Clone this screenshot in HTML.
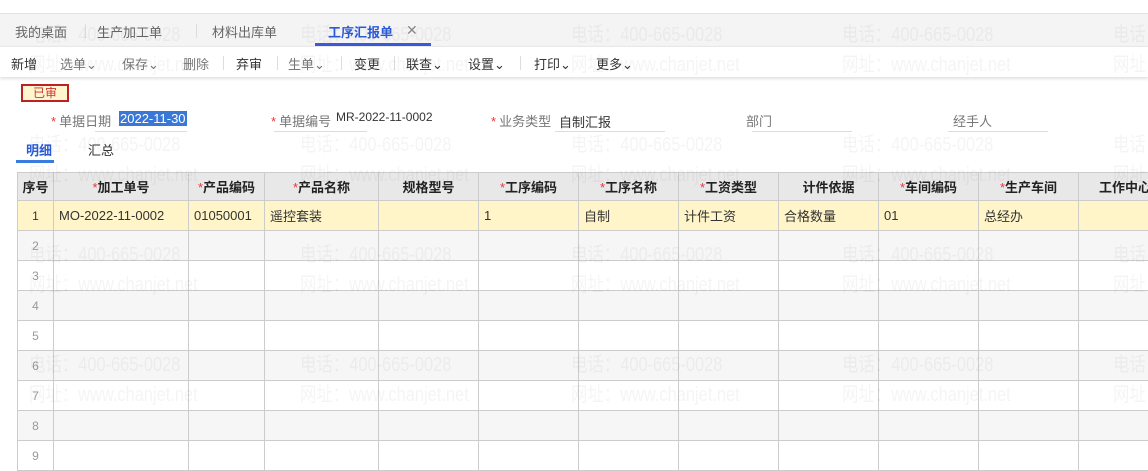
<!DOCTYPE html>
<html><head><meta charset="utf-8"><style>
*{margin:0;padding:0;box-sizing:border-box}
body{width:1148px;height:461px;overflow:hidden;background:#fff;font-family:"Liberation Sans","Noto Sans CJK SC",sans-serif;font-size:13px;color:#333;position:relative}
.tabs{position:absolute;top:13px;left:0;width:1148px;height:33px;background:#f4f4f4;border-top:1px solid #e3e3e3}
.tab{position:absolute;top:8px;font-size:13px;color:#666}
.tb{position:absolute;top:46px;left:0;width:1148px;height:31px;background:#fff;box-shadow:0 2px 3px rgba(0,0,0,.12);border-top:1px solid #e8e8e8}
.tb span{position:absolute;top:7px;font-size:13px}
.sep{position:absolute;top:9px;width:1px;height:14px;background:#ddd}
.lab{position:absolute;top:111px;color:#777}
.lab i{color:#e33;font-style:normal;margin-right:3px}
.ul{position:absolute;top:131px;height:1px;background:#ddd}
table{position:absolute;left:17px;top:172px;border-collapse:collapse;table-layout:fixed;width:1161px}
td,th{border:1px solid #ccc;height:30px;padding:0 5px;white-space:nowrap;overflow:hidden;font-size:13px}
th{background:#e8e8e8;height:28px;font-weight:bold;color:#222;text-align:center}
th i{color:#e33;font-style:normal;font-weight:normal}
tr.y td{background:#fff5c8;color:#333}
tr.g td{background:#f6f6f6}
td.n{text-align:center;color:#999;font-size:12px;padding:0}
.wm{position:absolute;font-size:20px;color:rgba(0,0,0,.045);white-space:nowrap;transform:scaleX(.82);transform-origin:left;z-index:5;pointer-events:none}
</style></head><body>
<div class="tabs">
<span class="tab" style="left:15px">我的桌面</span>
<div class="sep" style="left:85px;top:10px"></div>
<span class="tab" style="left:97px">生产加工单</span>
<div class="sep" style="left:196px;top:10px"></div>
<span class="tab" style="left:212px">材料出库单</span>
<span class="tab" style="left:328px;color:#2b5bd8;font-weight:bold">工序汇报单</span>
<span class="tab" style="left:406px;color:#888;font-size:14px;top:8px">✕</span>
<div style="position:absolute;left:315px;top:29px;width:116px;height:3px;background:#3a5ad6"></div>
</div>
<div class="tb">
<span style="left:11px">新增</span>
<span style="left:60px;color:#777">选单⌄</span>
<span style="left:122px;color:#777">保存⌄</span>
<span style="left:183px;color:#777">删除</span><div class="sep" style="left:223px"></div>
<span style="left:236px">弃审</span><div class="sep" style="left:277px"></div>
<span style="left:288px;color:#777">生单⌄</span><div class="sep" style="left:341px"></div>
<span style="left:354px">变更</span><div class="sep" style="left:394px"></div>
<span style="left:406px">联查⌄</span>
<span style="left:468px">设置⌄</span><div class="sep" style="left:520px"></div>
<span style="left:534px">打印⌄</span>
<span style="left:596px">更多⌄</span>
</div>
<div style="position:absolute;left:21px;top:84px;width:48px;height:18px;border:2px solid #b22;background:#fff6d0;color:#c33;font-size:12px;text-align:center;line-height:14px">已审</div>
<span class="lab" style="left:51px"><i>*</i>单据日期</span>
<span style="position:absolute;left:119px;top:111px;background:#3a78d8;color:#fff;padding:0 1px">2022-11-30</span>
<div class="ul" style="left:95px;width:92px"></div>
<span class="lab" style="left:271px"><i>*</i>单据编号</span>
<span style="position:absolute;left:336px;top:110px;font-size:12px">MR-2022-11-0002</span>
<div class="ul" style="left:274px;width:93px"></div>
<span class="lab" style="left:491px"><i>*</i>业务类型</span>
<span style="position:absolute;left:559px;top:112px">自制汇报</span>
<div class="ul" style="left:555px;width:110px"></div>
<span class="lab" style="left:746px">部门</span>
<div class="ul" style="left:752px;width:100px"></div>
<span class="lab" style="left:953px">经手人</span>
<div class="ul" style="left:948px;width:100px"></div>
<span style="position:absolute;left:26px;top:140px;color:#2b5bd8;font-weight:bold">明细</span>
<span style="position:absolute;left:88px;top:140px">汇总</span>
<div style="position:absolute;left:16px;top:160px;width:38px;height:3px;background:#3a7be0"></div>
<table>
<colgroup><col style="width:36px"><col style="width:135px"><col style="width:76px"><col style="width:114px"><col style="width:100px"><col style="width:100px"><col style="width:100px"><col style="width:100px"><col style="width:100px"><col style="width:100px"><col style="width:100px"><col style="width:100px"></colgroup>
<tr><th style="padding:0 2px">序号</th><th><i>*</i>加工单号</th><th><i>*</i>产品编码</th><th><i>*</i>产品名称</th><th>规格型号</th><th><i>*</i>工序编码</th><th><i>*</i>工序名称</th><th><i>*</i>工资类型</th><th>计件依据</th><th><i>*</i>车间编码</th><th><i>*</i>生产车间</th><th style="text-align:left;padding-left:20px">工作中心</th></tr>
<tr class="y"><td class="n" style="color:#333">1</td><td>MO-2022-11-0002</td><td>01050001</td><td>遥控套装</td><td></td><td>1</td><td>自制</td><td>计件工资</td><td>合格数量</td><td>01</td><td>总经办</td><td></td></tr>
<tr class="g"><td class="n">2</td><td></td><td></td><td></td><td></td><td></td><td></td><td></td><td></td><td></td><td></td><td></td></tr>
<tr><td class="n">3</td><td></td><td></td><td></td><td></td><td></td><td></td><td></td><td></td><td></td><td></td><td></td></tr>
<tr class="g"><td class="n">4</td><td></td><td></td><td></td><td></td><td></td><td></td><td></td><td></td><td></td><td></td><td></td></tr>
<tr><td class="n">5</td><td></td><td></td><td></td><td></td><td></td><td></td><td></td><td></td><td></td><td></td><td></td></tr>
<tr class="g"><td class="n">6</td><td></td><td></td><td></td><td></td><td></td><td></td><td></td><td></td><td></td><td></td><td></td></tr>
<tr><td class="n">7</td><td></td><td></td><td></td><td></td><td></td><td></td><td></td><td></td><td></td><td></td><td></td></tr>
<tr class="g"><td class="n">8</td><td></td><td></td><td></td><td></td><td></td><td></td><td></td><td></td><td></td><td></td><td></td></tr>
<tr><td class="n">9</td><td></td><td></td><td></td><td></td><td></td><td></td><td></td><td></td><td></td><td></td><td></td></tr>
</table>
<div id="w"></div>
<script>
var h='';[29,300,571,842,1113].forEach(function(x){[18,128,238,348].forEach(function(y){h+='<div class="wm" style="left:'+x+'px;top:'+y+'px">电话：400-665-0028</div><div class="wm" style="left:'+x+'px;top:'+(y+30)+'px">网址：www.chanjet.net</div>';});});document.getElementById('w').innerHTML=h;
</script>
</body></html>
